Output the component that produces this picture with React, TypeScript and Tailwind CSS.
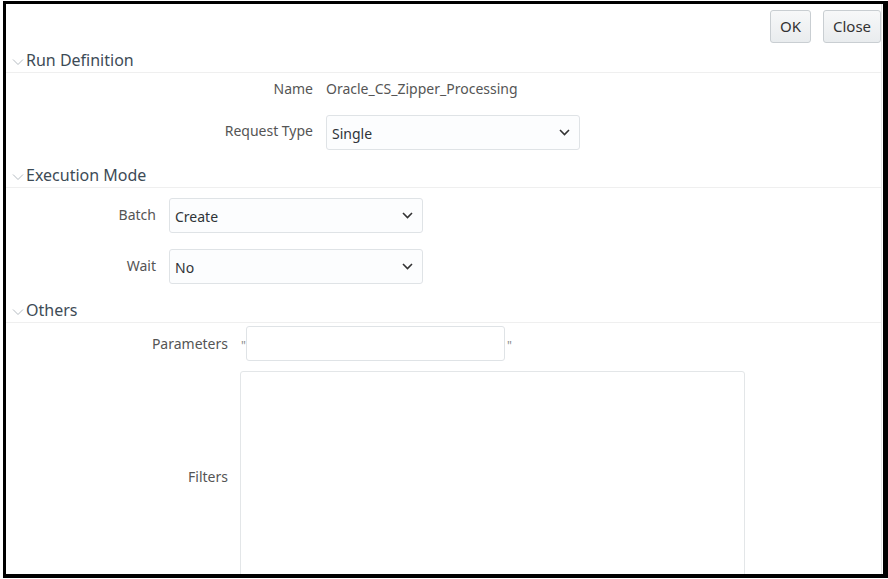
import React from 'react';

const font = { fontFamily: '"Noto Sans", "Open Sans", sans-serif' };

const Chevron = () => (
  <svg width="12" height="8" viewBox="0 0 12 8" className="mr-[2px] mt-[3px]">
    <path d="M1 1.5 L6 6.5 L11 1.5" fill="none" stroke="#b5bcc2" strokeWidth="1" />
  </svg>
);

const SectionHeader = ({ title, height }: { title: string; height: string }) => (
  <div className={`flex items-end pl-[6px] pb-[1px] border-b border-[#efefef] ${height}`}>
    <div className="flex items-center h-[22px]">
      <Chevron />
      <span className="text-[16px] leading-[22px] text-[#3d4b56]">{title}</span>
    </div>
  </div>
);

const SelectBox = ({ value, width }: { value: string; width: string }) => (
  <div
    className={`flex items-center justify-between h-[35px] ${width} border border-[#dfe3e6] rounded-[3px] bg-[#fcfdfe] pl-[5px] pr-[9px]`}
  >
    <span className="text-[14px] text-[#2f3438] mt-[1px]">{value}</span>
    <svg width="11" height="7" viewBox="0 0 11 7">
      <path d="M1 1 L5.5 5.5 L10 1" fill="none" stroke="#333" strokeWidth="1.6" />
    </svg>
  </div>
);

export default function App() {
  return (
    <div className="w-[888px] h-[579px] bg-white" style={font}>
      <div className="ml-[3px] mt-[1px] w-[885px] h-[577px] border-[3px] border-r-[5px] border-b-[4px] border-black overflow-hidden">
        <div className="h-full mr-[1px] border-r border-[#e6e6e6]">
          {/* action buttons */}
          <div className="flex justify-end gap-[12px] pt-[6px]">
            <button className="h-[33px] w-[41px] border border-[#c9ced2] rounded-[3px] bg-gradient-to-b from-[#f7f8f9] to-[#e9ecee] text-[15px] text-[#333]">
              OK
            </button>
            <button className="h-[33px] w-[58px] border border-[#c9ced2] rounded-[3px] bg-gradient-to-b from-[#f7f8f9] to-[#e9ecee] text-[15px] text-[#333]">
              Close
            </button>
          </div>

          <SectionHeader title="Run Definition" height="h-[30px]" />
          <div className="flex items-center mt-[4px] h-[22px]">
            <div className="w-[307px] text-right text-[14px] text-[#555]">Name</div>
            <div className="ml-[13px] text-[14px] text-[#555]">Oracle_CS_Zipper_Processing</div>
          </div>
          <div className="flex items-center mt-[16px]">
            <div className="w-[307px] text-right text-[14px] text-[#555] -mt-[5px]">Request Type</div>
            <div className="ml-[13px]">
              <SelectBox value="Single" width="w-[254px]" />
            </div>
          </div>

          <SectionHeader title="Execution Mode" height="h-[38px]" />
          <div className="flex items-center mt-[10px]">
            <div className="w-[150px] text-right text-[14px] text-[#555] -mt-[3px]">Batch</div>
            <div className="ml-[13px]">
              <SelectBox value="Create" width="w-[254px]" />
            </div>
          </div>
          <div className="flex items-center mt-[16px]">
            <div className="w-[150px] text-right text-[14px] text-[#555] -mt-[3px]">Wait</div>
            <div className="ml-[13px]">
              <SelectBox value="No" width="w-[254px]" />
            </div>
          </div>

          <SectionHeader title="Others" height="h-[39px]" />
          <div className="flex items-center mt-[3px]">
            <div className="w-[222px] text-right text-[14px] text-[#555]">Parameters</div>
            <span className="ml-[13px] w-[5px] text-[12px] leading-[12px] text-[#8a8a8a] mt-[4px]">"</span>
            <div className="h-[35px] w-[259px] border border-[#dfe3e6] rounded-[3px] bg-white" />
            <span className="ml-[2px] text-[12px] leading-[12px] text-[#8a8a8a] mt-[4px]">"</span>
          </div>
          <div className="flex items-center mt-[10px]">
            <div className="w-[222px] text-right text-[14px] text-[#555]">Filters</div>
            <div className="ml-[12px] h-[210px] w-[505px] border border-[#e3e6e8] rounded-[3px] bg-white" />
          </div>
        </div>
      </div>
    </div>
  );
}
